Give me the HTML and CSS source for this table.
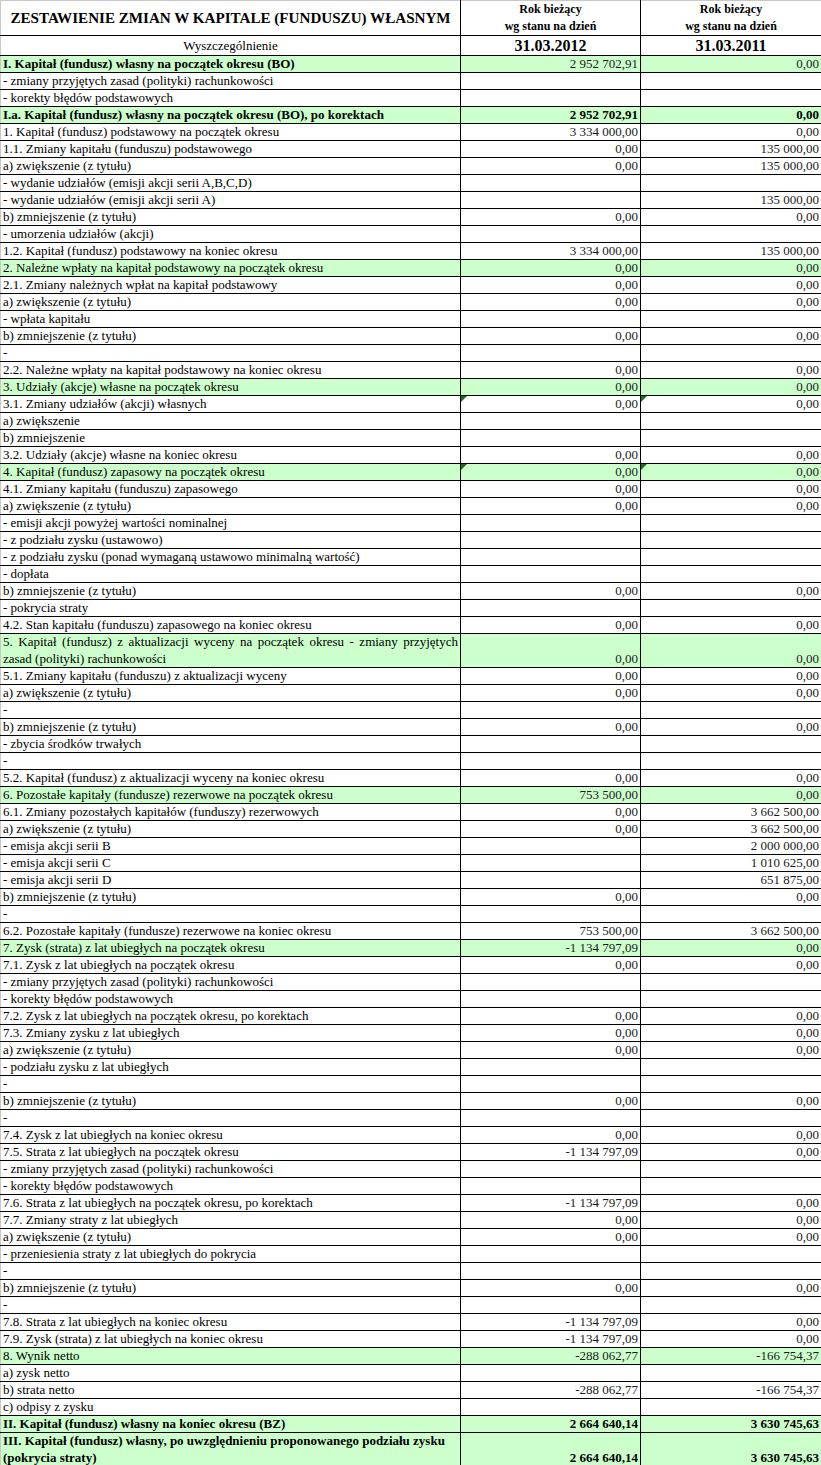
FILE: index.html
```html
<!DOCTYPE html>
<html lang="pl">
<head>
<meta charset="utf-8">
<title>Zestawienie zmian w kapitale (funduszu) własnym</title>
<link rel="stylesheet" href="styles.css">
</head>
<body>
<table class="sheet">
<colgroup><col class="c1"><col class="c2"><col class="c3"></colgroup>
<thead>
<tr class="h1">
<th class="title">ZESTAWIENIE ZMIAN W KAPITALE (FUNDUSZU) WŁASNYM</th>
<th class="period">Rok bieżący<br>wg stanu na dzień</th>
<th class="period">Rok bieżący<br>wg stanu na dzień</th>
</tr>
<tr class="h2">
<th class="wysz">Wyszczególnienie</th>
<th class="date">31.03.2012</th>
<th class="date">31.03.2011</th>
</tr>
</thead>
<tbody>
<tr class="g"><td class="lb">I. Kapitał (fundusz) własny na początek okresu (BO)</td><td>2 952 702,91</td><td>0,00</td></tr>
<tr><td>- zmiany przyjętych zasad (polityki) rachunkowości</td><td></td><td></td></tr>
<tr><td>- korekty błędów podstawowych</td><td></td><td></td></tr>
<tr class="g b"><td>I.a. Kapitał (fundusz) własny na początek okresu (BO), po korektach</td><td>2 952 702,91</td><td>0,00</td></tr>
<tr><td>1. Kapitał (fundusz) podstawowy na początek okresu</td><td>3 334 000,00</td><td>0,00</td></tr>
<tr><td>1.1. Zmiany kapitału (funduszu) podstawowego</td><td>0,00</td><td>135 000,00</td></tr>
<tr><td>a) zwiększenie (z tytułu)</td><td>0,00</td><td>135 000,00</td></tr>
<tr><td>- wydanie udziałów (emisji akcji serii A,B,C,D)</td><td></td><td></td></tr>
<tr><td>- wydanie udziałów (emisji akcji serii A)</td><td></td><td>135 000,00</td></tr>
<tr><td>b) zmniejszenie (z tytułu)</td><td>0,00</td><td>0,00</td></tr>
<tr><td>- umorzenia udziałów (akcji)</td><td></td><td></td></tr>
<tr><td>1.2. Kapitał (fundusz) podstawowy na koniec okresu</td><td>3 334 000,00</td><td>135 000,00</td></tr>
<tr class="g"><td>2. Należne wpłaty na kapitał podstawowy na początek okresu</td><td>0,00</td><td>0,00</td></tr>
<tr><td>2.1. Zmiany należnych wpłat na kapitał podstawowy</td><td>0,00</td><td>0,00</td></tr>
<tr><td>a) zwiększenie (z tytułu)</td><td>0,00</td><td>0,00</td></tr>
<tr><td>- wpłata kapitału</td><td></td><td></td></tr>
<tr><td>b) zmniejszenie (z tytułu)</td><td>0,00</td><td>0,00</td></tr>
<tr><td>-</td><td></td><td></td></tr>
<tr><td>2.2. Należne wpłaty na kapitał podstawowy na koniec okresu</td><td>0,00</td><td>0,00</td></tr>
<tr class="g"><td>3. Udziały (akcje) własne na początek okresu</td><td>0,00</td><td>0,00</td></tr>
<tr><td>3.1. Zmiany udziałów (akcji) własnych</td><td class="tri">0,00</td><td class="tri">0,00</td></tr>
<tr><td>a) zwiększenie</td><td></td><td></td></tr>
<tr><td>b) zmniejszenie</td><td></td><td></td></tr>
<tr><td>3.2. Udziały (akcje) własne na koniec okresu</td><td>0,00</td><td>0,00</td></tr>
<tr class="g"><td>4. Kapitał (fundusz) zapasowy na początek okresu</td><td class="tri">0,00</td><td class="tri">0,00</td></tr>
<tr><td>4.1. Zmiany kapitału (funduszu) zapasowego</td><td>0,00</td><td>0,00</td></tr>
<tr><td>a) zwiększenie (z tytułu)</td><td>0,00</td><td>0,00</td></tr>
<tr><td>- emisji akcji powyżej wartości nominalnej</td><td></td><td></td></tr>
<tr><td>- z podziału zysku (ustawowo)</td><td></td><td></td></tr>
<tr><td>- z podziału zysku (ponad wymaganą ustawowo minimalną wartość)</td><td></td><td></td></tr>
<tr><td>- dopłata</td><td></td><td></td></tr>
<tr><td>b) zmniejszenie (z tytułu)</td><td>0,00</td><td>0,00</td></tr>
<tr><td>- pokrycia straty</td><td></td><td></td></tr>
<tr><td>4.2. Stan kapitału (funduszu) zapasowego na koniec okresu</td><td>0,00</td><td>0,00</td></tr>
<tr class="g dbl"><td class="just">5. Kapitał (fundusz) z aktualizacji wyceny na początek okresu - zmiany przyjętych zasad (polityki) rachunkowości</td><td>0,00</td><td>0,00</td></tr>
<tr><td>5.1. Zmiany kapitału (funduszu) z aktualizacji wyceny</td><td>0,00</td><td>0,00</td></tr>
<tr><td>a) zwiększenie (z tytułu)</td><td>0,00</td><td>0,00</td></tr>
<tr><td>-</td><td></td><td></td></tr>
<tr><td>b) zmniejszenie (z tytułu)</td><td>0,00</td><td>0,00</td></tr>
<tr><td>- zbycia środków trwałych</td><td></td><td></td></tr>
<tr><td>-</td><td></td><td></td></tr>
<tr><td>5.2. Kapitał (fundusz) z aktualizacji wyceny na koniec okresu</td><td>0,00</td><td>0,00</td></tr>
<tr class="g"><td>6. Pozostałe kapitały (fundusze) rezerwowe na początek okresu</td><td>753 500,00</td><td>0,00</td></tr>
<tr><td>6.1. Zmiany pozostałych kapitałów (funduszy) rezerwowych</td><td>0,00</td><td>3 662 500,00</td></tr>
<tr><td>a) zwiększenie (z tytułu)</td><td>0,00</td><td>3 662 500,00</td></tr>
<tr><td>- emisja akcji serii B</td><td></td><td>2 000 000,00</td></tr>
<tr><td>- emisja akcji serii C</td><td></td><td>1 010 625,00</td></tr>
<tr><td>- emisja akcji serii D</td><td></td><td>651 875,00</td></tr>
<tr><td>b) zmniejszenie (z tytułu)</td><td>0,00</td><td>0,00</td></tr>
<tr><td>-</td><td></td><td></td></tr>
<tr><td>6.2. Pozostałe kapitały (fundusze) rezerwowe na koniec okresu</td><td>753 500,00</td><td>3 662 500,00</td></tr>
<tr class="g"><td>7. Zysk (strata) z lat ubiegłych na początek okresu</td><td>-1 134 797,09</td><td>0,00</td></tr>
<tr><td>7.1. Zysk z lat ubiegłych na początek okresu</td><td>0,00</td><td>0,00</td></tr>
<tr><td>- zmiany przyjętych zasad (polityki) rachunkowości</td><td></td><td></td></tr>
<tr><td>- korekty błędów podstawowych</td><td></td><td></td></tr>
<tr><td>7.2. Zysk z lat ubiegłych na początek okresu, po korektach</td><td>0,00</td><td>0,00</td></tr>
<tr><td>7.3. Zmiany zysku z lat ubiegłych</td><td>0,00</td><td>0,00</td></tr>
<tr><td>a) zwiększenie (z tytułu)</td><td>0,00</td><td>0,00</td></tr>
<tr><td>- podziału zysku z lat ubiegłych</td><td></td><td></td></tr>
<tr><td>-</td><td></td><td></td></tr>
<tr><td>b) zmniejszenie (z tytułu)</td><td>0,00</td><td>0,00</td></tr>
<tr><td>-</td><td></td><td></td></tr>
<tr><td>7.4. Zysk z lat ubiegłych na koniec okresu</td><td>0,00</td><td>0,00</td></tr>
<tr><td>7.5. Strata z lat ubiegłych na początek okresu</td><td>-1 134 797,09</td><td>0,00</td></tr>
<tr><td>- zmiany przyjętych zasad (polityki) rachunkowości</td><td></td><td></td></tr>
<tr><td>- korekty błędów podstawowych</td><td></td><td></td></tr>
<tr><td>7.6. Strata z lat ubiegłych na początek okresu, po korektach</td><td>-1 134 797,09</td><td>0,00</td></tr>
<tr><td>7.7. Zmiany straty z lat ubiegłych</td><td>0,00</td><td>0,00</td></tr>
<tr><td>a) zwiększenie (z tytułu)</td><td>0,00</td><td>0,00</td></tr>
<tr><td>- przeniesienia straty z lat ubiegłych do pokrycia</td><td></td><td></td></tr>
<tr><td>-</td><td></td><td></td></tr>
<tr><td>b) zmniejszenie (z tytułu)</td><td>0,00</td><td>0,00</td></tr>
<tr><td>-</td><td></td><td></td></tr>
<tr><td>7.8. Strata z lat ubiegłych na koniec okresu</td><td>-1 134 797,09</td><td>0,00</td></tr>
<tr><td>7.9. Zysk (strata) z lat ubiegłych na koniec okresu</td><td>-1 134 797,09</td><td>0,00</td></tr>
<tr class="g"><td>8. Wynik netto</td><td>-288 062,77</td><td>-166 754,37</td></tr>
<tr><td>a) zysk netto</td><td></td><td></td></tr>
<tr><td>b) strata netto</td><td>-288 062,77</td><td>-166 754,37</td></tr>
<tr><td>c) odpisy z zysku</td><td></td><td></td></tr>
<tr class="g b"><td>II. Kapitał (fundusz) własny na koniec okresu (BZ)</td><td>2 664 640,14</td><td>3 630 745,63</td></tr>
<tr class="g b dbl"><td>III. Kapitał (fundusz) własny, po uwzględnieniu proponowanego podziału zysku (pokrycia straty)</td><td>2 664 640,14</td><td>3 630 745,63</td></tr>
</tbody>
</table>
</body>
</html>
```
FILE: styles.css
```css
html, body {
  margin: 0;
  padding: 0;
  background: #ffffff;
}

.sheet {
  border-collapse: collapse;
  table-layout: fixed;
  width: 821px;
  font-family: "Liberation Serif", "Times New Roman", serif;
  color: #000;
  border-top: 1px solid #c8c8c8;
  border-left: 1px solid #c8c8c8;
}

.c1 { width: 460px; }
.c2 { width: 180px; }
.c3 { width: 181px; }

.sheet th,
.sheet td {
  border-right: 1px solid #000;
  border-bottom: 1px solid #000;
  padding: 0 2px;
}

.sheet th:first-child,
.sheet td:first-child {
  border-left: 1px solid #c8c8c8;
}

.h1 th {
  height: 32px;
  vertical-align: middle;
  text-align: center;
}

.title {
  font-size: 15.1px;
  font-weight: bold;
  white-space: nowrap;
  padding-top: 1px;
}

.period {
  font-size: 12px;
  font-weight: bold;
  line-height: 17px;
}

.h2 th {
  height: 19px;
  text-align: center;
  vertical-align: middle;
}

.wysz {
  font-size: 13px;
  font-weight: normal;
  line-height: 17px;
}

.date {
  font-size: 16px;
  font-weight: bold;
  line-height: 19px;
}

.sheet td {
  height: 16px;
  line-height: 16px;
  font-size: 13px;
  vertical-align: bottom;
  white-space: nowrap;
}

.sheet td:first-child {
  text-align: left;
}

.sheet td + td {
  text-align: right;
  color: #1a1a1a;
}

.g td {
  background: #ccffcc;
}

.b td,
.lb {
  font-weight: bold;
}

.b td + td {
  color: #000;
}

.dbl td {
  height: 33px;
}

.dbl td:first-child {
  white-space: normal;
  line-height: 16.5px;
}

.just {
  text-align: justify !important;
}

.tri {
  position: relative;
}

.tri::before {
  content: "";
  position: absolute;
  left: 0;
  top: 0;
  border-top: 6px solid #1f6a1f;
  border-right: 6px solid transparent;
}
```
